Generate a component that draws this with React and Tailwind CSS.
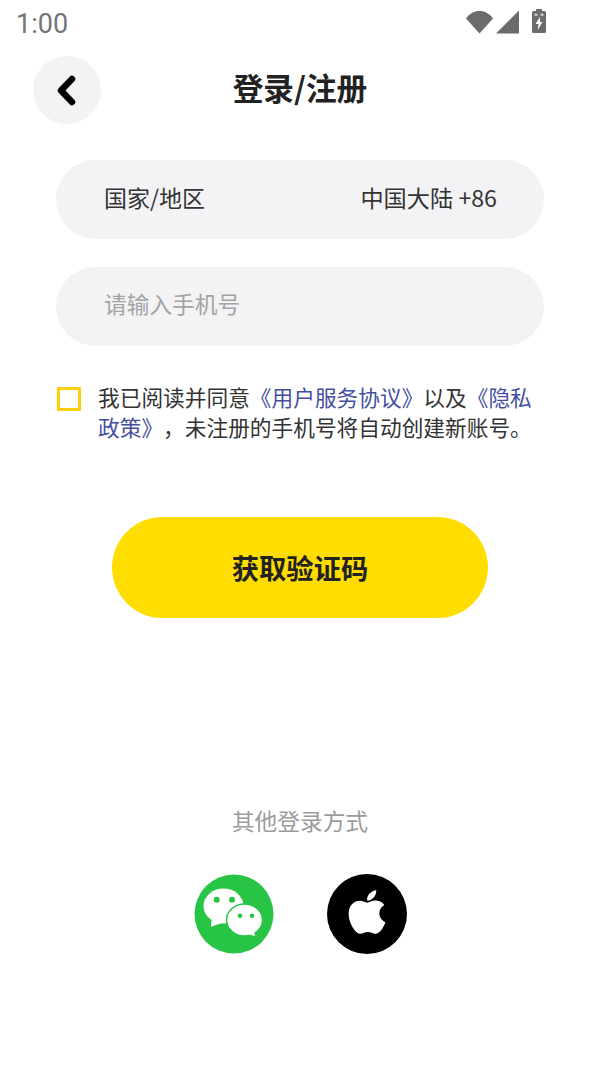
import { useState } from 'react';
import { FaApple } from 'react-icons/fa';

const cjk = '"Noto Sans CJK SC", "Noto Sans", sans-serif';

function StatusIcons() {
  return (
    <div className="flex items-start gap-[13px]">
      <svg width="53" height="24" viewBox="0 0 53 24" className="mt-[10px]" fill="#6b6b6b">
        <path d="M0 8.500C3.500 3.500 8 1 13.500 1S23.500 3.500 27 8.500L13.500 23.500Z" />
        <path d="M53 0.500V23.500H30Z" />
      </svg>
      <svg width="14" height="24" viewBox="0 0 14 24" className="mt-[9px]">
        <path d="M4 0h6v2h2.500A1.500 1.500 0 0 1 14 3.500v19a1.500 1.500 0 0 1-1.500 1.500h-11A1.500 1.500 0 0 1 0 22.500v-19A1.500 1.500 0 0 1 1.500 2H4Z" fill="#6b6b6b" />
        <path d="M8 8 3.500 15h3l-.8 6 4.800-8H8Z" fill="#fff" />
        <rect x="2.500" y="4.500" width="3" height="2.500" fill="#c4c4c4" />
        <rect x="8.500" y="4.500" width="3" height="2.500" fill="#c4c4c4" />
      </svg>
    </div>
  );
}

function WechatIcon() {
  return (
    <svg width="80" height="80" viewBox="0 0 80 80">
      <circle cx="40" cy="40" r="39.500" fill="#28c445" />
      <ellipse cx="29.500" cy="32" rx="20" ry="17.500" fill="#fff" />
      <path d="M17.500 46 17 52.800 28 49Z" fill="#fff" />
      <circle cx="22.700" cy="25.700" r="3" fill="#28c445" />
      <circle cx="38" cy="25.700" r="3" fill="#28c445" />
      <ellipse cx="50.500" cy="46" rx="18" ry="16" fill="#fff" stroke="#28c445" strokeWidth="1.500" />
      <path d="M54 60 61 62.300 60 57Z" fill="#fff" />
      <circle cx="46" cy="41.700" r="2.300" fill="#28c445" />
      <circle cx="58" cy="41.700" r="2.300" fill="#28c445" />
    </svg>
  );
}

export default function App() {
  const [phone, setPhone] = useState('');
  const [agreed, setAgreed] = useState(false);

  return (
    <div className="w-[600px] h-[1066px] bg-white overflow-hidden flex flex-col" style={{ fontFamily: cjk }}>
      {/* Status bar */}
      <div className="h-[56px] pl-[16px] pr-[54px] flex justify-between items-start">
        <span className="text-[27px] leading-[49px] text-[#757575]" style={{ fontFamily: 'Roboto, sans-serif' }}>1:00</span>
        <StatusIcons />
      </div>

      {/* Header */}
      <div className="px-[33px] grid grid-cols-[68px_1fr_68px] items-center">
        <button className="w-[68px] h-[68px] rounded-full bg-[#f3f3f5] flex items-center justify-center">
          <svg width="24" height="32" viewBox="0 0 24 32" fill="none" stroke="#000" strokeWidth="6.500" strokeLinecap="round" strokeLinejoin="round">
            <path d="M17 5 6 16.500 17 28" />
          </svg>
        </button>
        <h1 className="text-[30.700px] leading-[62px] pb-[6px] font-bold text-[#222] text-center">登录/注册</h1>
      </div>

      {/* Form */}
      <div className="mt-[36px] px-[56px] flex flex-col gap-[28px]">
        <div className="h-[79px] rounded-full bg-[#f3f3f5] px-[48px] pb-[4px] flex items-center justify-between text-[23px] text-[#333]">
          <span>国家/地区</span>
          <span className="mr-[-1px] text-[23.200px]">中国大陆 +86</span>
        </div>
        <div className="h-[79px] rounded-full bg-[#f3f3f5] px-[48px] pb-[4px] flex items-center">
          <input
            value={phone}
            onChange={(e) => setPhone(e.target.value)}
            placeholder="请输入手机号"
            className="w-full bg-transparent outline-none text-[22.700px] text-[#333] placeholder-[#a3a3a3]"
          />
        </div>
      </div>

      {/* Agreement */}
      <div className="mt-[36px] pl-[57px] pr-[60px] flex items-start gap-[17px]">
        <button
          onClick={() => setAgreed(!agreed)}
          className={`mt-[5px] w-[24px] h-[24px] shrink-0 border-[3px] border-[#ffcf0d] ${agreed ? 'bg-[#ffcf0d]' : ''}`}
        />
        <p className="text-[21.700px] leading-[30px] text-[#333] [text-spacing-trim:space-all]">
          我已阅读并同意<span className="text-[#444e9e]">《用户服务协议》</span>以及<span className="text-[#444e9e]">《隐私政策》</span>，未注册的手机号将自动创建新账号。
        </p>
      </div>

      {/* Submit */}
      <button className="mt-[75px] mx-auto w-[376px] h-[101px] shrink-0 rounded-full bg-[#ffdd00] text-[27.300px] font-bold text-[#222]">
        获取验证码
      </button>

      {/* Other logins */}
      <p className="mt-[186px] text-center text-[22.700px] leading-[34px] text-[#9b9b9b]">其他登录方式</p>
      <div className="mt-[36px] flex justify-center gap-[53px]">
        <WechatIcon />
        <div className="w-[80px] h-[80px] rounded-full bg-black flex items-center justify-center">
          <FaApple className="text-white text-[50px] -mt-[5px]" />
        </div>
      </div>
    </div>
  );
}
